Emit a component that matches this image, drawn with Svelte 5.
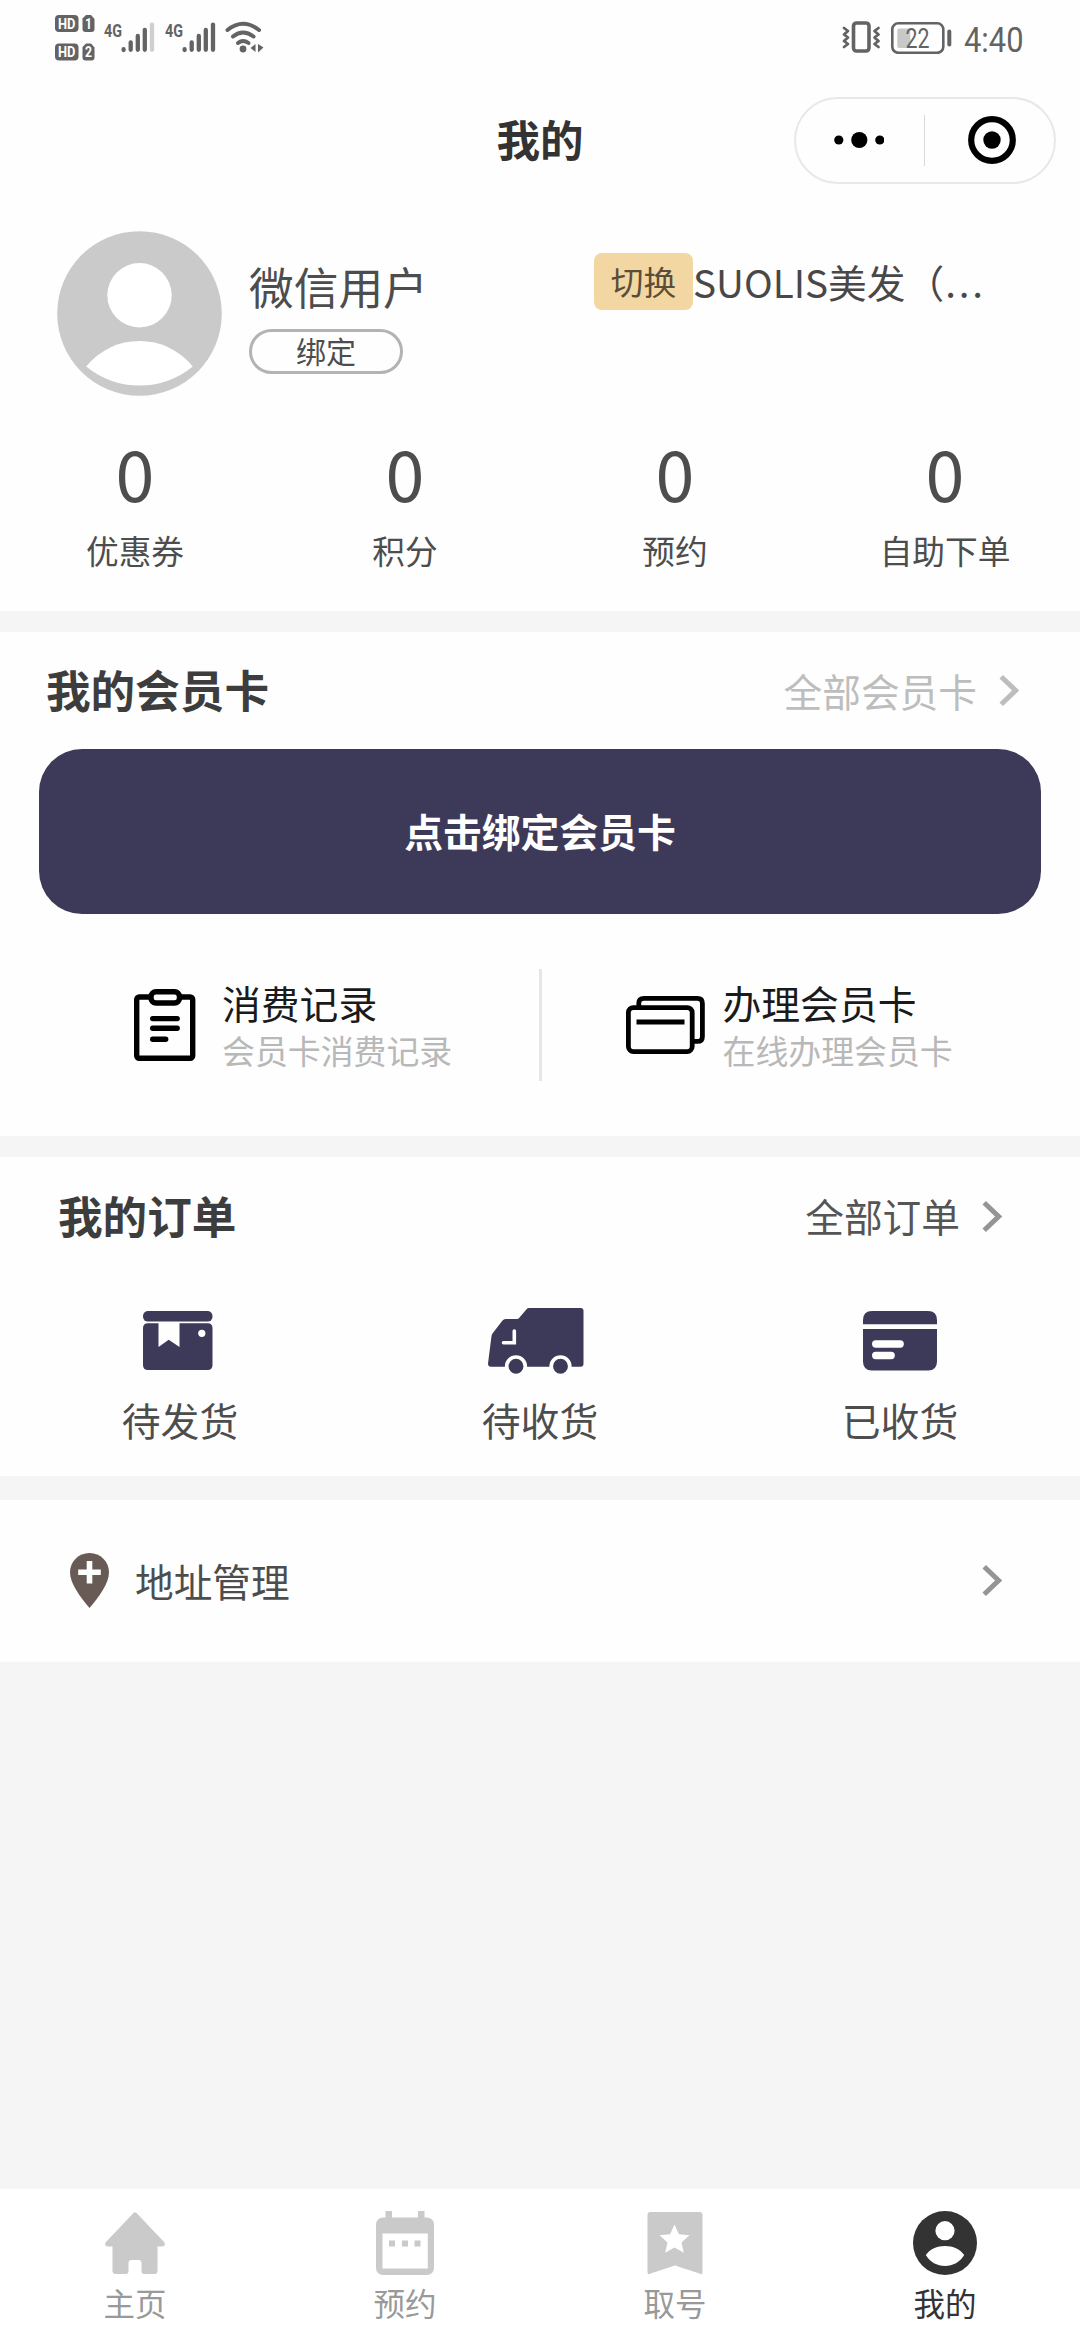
<script lang="ts">
  interface Stat {
    label: string;
    value: number;
  }

  const stats: Stat[] = [
    { label: "优惠券", value: 0 },
    { label: "积分", value: 0 },
    { label: "预约", value: 0 },
    { label: "自助下单", value: 0 },
  ];

  const orders = [
    { icon: "box", label: "待发货" },
    { icon: "truck", label: "待收货" },
    { icon: "done", label: "已收货" },
  ];

  const tabs = [
    { icon: "home", label: "主页" },
    { icon: "calendar", label: "预约" },
    { icon: "ticket", label: "取号" },
    { icon: "user", label: "我的" },
  ];

  let active = $state("user");
</script>

{#snippet chevron()}
  <svg class="chevron" width="20" height="31" viewBox="0 0 20 31">
    <path d="M2.2 1.8 16.6 15.5 2.2 29.2" fill="none" stroke="currentColor" stroke-width="5" />
  </svg>
{/snippet}

{#snippet signal(full: boolean)}
  <svg width="52" height="34" viewBox="0 0 52 34">
    <text x="0" y="17" font-size="19" font-weight="700" textLength="18" lengthAdjust="spacingAndGlyphs">4G</text>
    <g stroke="currentColor" stroke-width="4.3" stroke-linecap="round">
      <path d="M19.6 29.2v.8M26.7 22.4v7.4M33.8 16v13.8M40.8 10v19.8" />
      <path d="M48 4.6v25.2" stroke={full ? "currentColor" : "#cfcfcf"} />
    </g>
  </svg>
{/snippet}

<div class="page">
  <div class="status">
    <svg class="hd" width="40" height="46" viewBox="0 0 40 46">
      <rect x="0" y="0" width="23.5" height="17" rx="4" />
      <path d="M31 0h5l3.5 4v10q0 3-3 3h-6q-3 0-3-3V3.5z" />
      <rect x="0" y="28.5" width="23.5" height="17" rx="4" />
      <path d="M31 28.5h5l3.5 4v10q0 3-3 3h-6q-3 0-3-3V32z" />
      <g fill="#fff" font-size="15" font-weight="700">
        <text x="3" y="13.8" textLength="17.5" lengthAdjust="spacingAndGlyphs">HD</text>
        <text x="30" y="13.8" textLength="7" lengthAdjust="spacingAndGlyphs">1</text>
        <text x="3" y="42.3" textLength="17.5" lengthAdjust="spacingAndGlyphs">HD</text>
        <text x="30" y="42.3" textLength="7" lengthAdjust="spacingAndGlyphs">2</text>
      </g>
    </svg>
    <span class="sim">{@render signal(false)}</span>
    <span class="sim">{@render signal(true)}</span>
    <svg class="wifi" width="40" height="32" viewBox="0 0 40 32">
      <g fill="none" stroke="currentColor" stroke-width="4" stroke-linecap="round">
        <path d="M2.5 9Q18 -3.5 34 9" />
        <path d="M8 15.5q10-8 20.5 0" />
        <path d="M13 22q5-4 10.5 0" />
      </g>
      <circle cx="18" cy="28" r="3.4" />
      <path d="M30.5 23v8l-5-4zM33 23v8.5l5.5-5z" />
    </svg>

    <svg class="vibrate" width="39" height="32" viewBox="0 0 39 32">
      <rect x="11.5" y="2" width="15.5" height="28" rx="3" fill="none" stroke="currentColor" stroke-width="3.6" />
      <g fill="none" stroke="currentColor" stroke-width="2.8" stroke-linejoin="round" stroke-linecap="round">
        <path d="M2 7l4 3-4 3.5 4 3-4 3.5 4 3-4 3" />
        <path d="M36.5 7l-4 3 4 3.5-4 3 4 3.5-4 3 4 3" />
      </g>
    </svg>
    <svg class="battery" width="61" height="32" viewBox="0 0 61 32">
      <rect x="1.3" y="1.3" width="51" height="29.5" rx="6" fill="none" stroke="currentColor" stroke-width="2.6" />
      <rect x="6.3" y="6.5" width="13" height="19.5" rx="2" fill="#c8c8c8" />
      <rect x="56.3" y="7.5" width="4" height="17" rx="2" />
      <text x="14.5" y="25.5" font-size="27" textLength="24" lengthAdjust="spacingAndGlyphs">22</text>
    </svg>
    <svg class="clock" width="62" height="48" viewBox="0 0 62 48">
      <text x="1" y="36.5" font-size="35" textLength="59.5" lengthAdjust="spacingAndGlyphs">4:40</text>
    </svg>
  </div>

  <header class="nav">
    <h1>我的</h1>
    <div class="capsule">
      <svg width="50" height="20" viewBox="0 0 50 20">
        <circle cx="4.8" cy="10" r="4.6" />
        <circle cx="25.3" cy="10" r="8.1" />
        <circle cx="45.8" cy="10" r="4.6" />
      </svg>
      <i></i>
      <svg width="50" height="50" viewBox="0 0 50 50">
        <circle cx="25" cy="25" r="20.8" fill="none" stroke="#000" stroke-width="6.2" />
        <circle cx="25" cy="25" r="8.7" />
      </svg>
    </div>
  </header>

  <section class="profile">
    <div class="user">
      <svg class="avatar" width="165" height="165" viewBox="0 0 165 165">
        <circle cx="82.5" cy="82.5" r="82.3" fill="#cacaca" />
        <circle cx="82.5" cy="64.3" r="32.2" fill="#fff" />
        <path d="M29.2 135.5A68.3 68.3 0 0 1 135.8 135.5A84 84 0 0 1 29.2 135.5z" fill="#fff" />
      </svg>
      <div class="identity">
        <span class="name">微信用户</span>
        <button class="bind">绑定</button>
      </div>
      <div class="store">
        <button class="switch">切换</button>
        <span class="store-name">SUOLIS美发（<span class="dots">...</span></span>
      </div>
    </div>

    <div class="stats">
      {#each stats as stat}
        <div class="stat">
          <strong>{stat.value}</strong>
          <span>{stat.label}</span>
        </div>
      {/each}
    </div>
  </section>

  <section class="member">
    <div class="head">
      <h2>我的会员卡</h2>
      <a class="more" href="#cards"><span>全部会员卡</span>{@render chevron()}</a>
    </div>
    <button class="bind-card"><span>点击绑定会员卡</span></button>
    <div class="links">
      <a class="link" href="#records">
        <svg width="62" height="72" viewBox="0 0 62 72" fill="none" stroke="#000" stroke-width="5.4">
          <rect x="2.7" y="8" width="56" height="61.3" rx="2.5" />
          <rect x="17" y="2.7" width="28.5" height="11.3" rx="5" fill="#fff" />
          <path d="M18.7 29.6h24.5M18.7 39.3h24.5M18.7 50.2h13" stroke-linecap="round" />
        </svg>
        <div>
          <b>消费记录</b>
          <small>会员卡消费记录</small>
        </div>
      </a>
      <i></i>
      <a class="link apply" href="#apply">
        <svg width="79" height="58" viewBox="0 0 79 58" fill="none" stroke="#000" stroke-width="4.8">
          <path d="M12.8 10V7q0-4.6 5-4.6h53.6q5 0 5 5v33q0 5-5 5H68" />
          <rect x="2.4" y="11.6" width="63.8" height="44" rx="5" />
          <path d="M10.5 26h48" />
        </svg>
        <div>
          <b>办理会员卡</b>
          <small>在线办理会员卡</small>
        </div>
      </a>
    </div>
  </section>

  <section class="orders">
    <div class="head">
      <h2>我的订单</h2>
      <a class="more" href="#orders"><span>全部订单</span>{@render chevron()}</a>
    </div>
    <div class="order-row">
      {#each orders as order}
        <div class="order">
          <div class="order-icon {order.icon}">
            {#if order.icon === "box"}
              <svg width="70" height="59" viewBox="0 0 70 59">
                <rect width="69.5" height="10.6" rx="5" />
                <path d="M5 12.3h10.5v23.7l10.2-7.2 10.8 7.2V12.3h28q5 0 5 5V54q0 5-5 5H5q-5 0-5-5V17.3q0-5 5-5z" />
                <circle cx="58.8" cy="22.3" r="3.6" fill="#fff" />
              </svg>
            {:else if order.icon === "truck"}
              <svg width="96" height="66" viewBox="0 0 96 66">
                <path d="M41 0h51.5q3 0 3 3v52.5q0 3.3-3 3.3H3q-3 0-3-3.3L3.5 28q.2-1.5 1-2.5L14.5 12.5q1.2-1.5 3-1.5H29q1.5 0 2.3-1.2L38.5 1.2Q39.5 0 41 0z" />
                <path d="M26.3 23v11.8H15.5" fill="none" stroke="#fff" stroke-width="3.6" stroke-linecap="round" />
                <g stroke="#fff" stroke-width="3.7">
                  <circle cx="28" cy="58.3" r="9.3" />
                  <circle cx="72.5" cy="58.3" r="9.3" />
                </g>
              </svg>
            {:else}
              <svg width="74" height="60" viewBox="0 0 74 60">
                <path d="M9 0h56q9 0 9 9v4.3H0V9q0-9 9-9zM0 18h74v32.5q0 9-9 9H9q-9 0-9-9z" />
                <path d="M12.7 33h24.5M12.7 44.5h15.5" stroke="#fff" stroke-width="7.3" stroke-linecap="round" />
              </svg>
            {/if}
          </div>
          <span>{order.label}</span>
        </div>
      {/each}
    </div>
  </section>

  <section class="address">
    <svg width="39" height="55" viewBox="0 0 39 55">
      <path d="M19.5 0C30.5 0 39 8.5 39 19.5C39 30 29 44 19.5 55C10 44 0 30 0 19.5C0 8.5 8.5 0 19.5 0z" fill="#685b55" />
      <path d="M19.5 8v22.5M8.2 19.3h22.6" stroke="#fff" stroke-width="5.6" />
    </svg>
    <span>地址管理</span>
    {@render chevron()}
  </section>

  <nav class="tabbar">
    {#each tabs as tab}
      <button class="tab" class:active={active === tab.icon} onclick={() => (active = tab.icon)}>
        <svg width="64" height="64" viewBox="0 0 64 64">
          {#if tab.icon === "home"}
            <path d="M30 2.5q2-2.5 4 0L61.5 31.5q1.5 4-3 4H54.5V60q0 3-3 3H41q-2.5 0-2.5-3v-8q0-3-3-3h-7q-3 0-3 3v8q0 3-2.5 3H12.5q-3 0-3-3V35.5H5.5q-4.5 0-3-4z" />
          {:else if tab.icon === "calendar"}
            <rect x="3" y="6.5" width="58" height="57.5" rx="7" />
            <path d="M12.5 0h6.5v10h-6.5zM45 0h6.5v10H45z" />
            <path d="M9.5 22.5h45.3v35H9.5z" fill="#fff" />
            <path d="M16 29.5h6v6h-6zM29 29.5h6v6h-6zM41.5 29.5h6v6h-6z" />
          {:else if tab.icon === "ticket"}
            <path d="M7.5 1h49q3 0 3 3v57q0 3.5-3 1.5L35 55.5q-3-2-6 0L7.5 62.5q-3 2-3-1.5V4q0-3 3-3z" />
            <path d="M31.5 13.5l4.4 9.8 10.6 1-8 7.1 2.3 10.4-9.3-5.4-9.3 5.4 2.3-10.4-8-7.1 10.6-1z" fill="#fff" />
          {:else}
            <circle cx="32" cy="32" r="32" />
            <circle cx="32" cy="19.7" r="9.6" fill="#fff" />
            <path d="M12.8 44C17 38 24 35 32 35s15 3 19.2 9C47 51 40 55 32 55s-15-4-19.2-11z" fill="#fff" />
          {/if}
        </svg>
        <span>{tab.label}</span>
      </button>
    {/each}
  </nav>
</div>

<style>
  :global(body) {
    background: #f5f5f5;
  }

  .page {
    width: 1080px;
    height: 2340px;
    display: flex;
    flex-direction: column;
    background: #f5f5f5;
    color: #4d4d4d;
    font-family: "Noto Sans CJK SC", "Noto Sans", sans-serif;
  }

  .page *,
  .page {
    box-sizing: border-box;
  }

  svg {
    display: block;
    flex: none;
  }

  a {
    color: inherit;
    text-decoration: none;
  }

  button {
    margin: 0;
    padding: 0;
    border: 0;
    background: none;
    color: inherit;
    font: inherit;
  }

  h1,
  h2 {
    margin: 0;
    font-weight: 700;
  }

  section,
  .nav,
  .status,
  .tabbar {
    flex: none;
    background: #fefefe;
  }

  .status {
    height: 80px;
    display: flex;
    align-items: flex-start;
    padding: 15px 55px 0 55px;
    color: #636363;
  }

  .status svg {
    fill: currentColor;
    font-family: Roboto, sans-serif;
  }

  .sim {
    margin: 5px 0 0 9px;
  }

  .wifi {
    margin: 6px 0 0 8px;
  }

  .vibrate {
    margin: 6px 0 0 auto;
  }

  .battery {
    margin: 7px 0 0 10px;
  }

  .clock {
    margin: 0 0 0 11px;
  }

  .nav {
    height: 120px;
    display: grid;
    grid-template-columns: 1fr auto 1fr;
    align-items: center;
    padding-right: 24px;
    padding-left: 24px;
  }

  h1 {
    grid-column: 2;
    padding-bottom: 3px;
    color: #333;
    font-size: 43.5px;
    line-height: 50px;
  }

  .capsule {
    justify-self: end;
    width: 262px;
    height: 87px;
    display: flex;
    align-items: center;
    border: 2px solid #e8e8e8;
    border-radius: 44px;
    padding: 0 37px 0 38px;
  }

  .capsule i {
    flex: none;
    width: 1px;
    height: 51px;
    margin: 0 42px 0 40px;
    background: #d8d8d8;
  }

  .profile {
    height: 411px;
    padding-top: 31px;
  }

  .user {
    display: flex;
    align-items: flex-start;
    padding-left: 57px;
  }

  .identity {
    width: 345px;
    display: flex;
    flex-direction: column;
    align-items: flex-start;
    margin-left: 27px;
    padding-top: 28px;
  }

  .name {
    font-size: 44.7px;
    line-height: 54px;
  }

  .bind {
    width: 154px;
    height: 45px;
    margin-top: 16px;
    padding-bottom: 3px;
    border: 3px solid #b3b3b3;
    border-radius: 23px;
    font-size: 30px;
    line-height: 36px;
  }

  .store {
    display: flex;
    align-items: center;
    margin-top: 22px;
  }

  .switch {
    width: 99px;
    height: 57px;
    padding-bottom: 2px;
    border-radius: 8px;
    background: #f2d7a2;
    color: #5b4d38;
    font-size: 32.7px;
    line-height: 55px;
  }

  .store-name {
    color: #4a4748;
    font-size: 38.7px;
    line-height: 57px;
    white-space: nowrap;
  }

  .dots {
    margin-left: 1px;
    letter-spacing: 2.8px;
  }

  .stats {
    display: grid;
    grid-template-columns: repeat(4, 1fr);
    margin-top: 36px;
  }

  .stat {
    display: flex;
    flex-direction: column;
    align-items: center;
  }

  .stat strong {
    font-size: 70px;
    font-weight: 400;
    line-height: 80px;
  }

  .stat span {
    margin-top: 16px;
    font-size: 32.7px;
    line-height: 44px;
  }

  .member {
    height: 504px;
    margin-top: 21px;
  }

  .head {
    height: 117px;
    display: flex;
    align-items: center;
    justify-content: space-between;
    padding: 0 61px 0 46px;
  }

  h2 {
    padding-bottom: 3px;
    color: #3d3d3d;
    font-size: 44.6px;
    line-height: 54px;
  }

  .more {
    display: flex;
    align-items: center;
    gap: 22px;
    color: #bdbdbd;
    font-size: 38.7px;
    line-height: 50px;
  }

  .more span {
    padding-bottom: 2px;
  }

  .bind-card {
    width: 1002px;
    height: 165px;
    display: flex;
    align-items: center;
    justify-content: center;
    margin: 0 39px;
    border-radius: 43px;
    background: #3d3a59;
    color: #fff;
    font-size: 38.8px;
    font-weight: 700;
    line-height: 50px;
  }

  .bind-card span {
    padding-bottom: 3px;
  }

  .links {
    height: 112px;
    display: flex;
    align-items: center;
    margin-top: 55px;
  }

  .links i {
    width: 3px;
    height: 112px;
    background: #e6e6e6;
  }

  .link {
    width: 538.5px;
    display: flex;
    align-items: center;
    gap: 26px;
    padding-left: 134px;
  }

  .link.apply {
    gap: 18px;
    padding-left: 84px;
  }

  .link div {
    padding-top: 2px;
  }

  .link b,
  .link small {
    display: block;
    font-weight: 400;
    line-height: 48px;
  }

  .link b {
    color: #1a1a1a;
    font-size: 38.8px;
  }

  .link small {
    color: #b8b8b8;
    font-size: 32.9px;
  }

  .orders {
    height: 319px;
    margin-top: 21px;
  }

  .orders .head {
    height: 118px;
    padding: 0 78px 0 58px;
  }

  .orders .more {
    color: #555;
  }

  .orders .chevron,
  .address .chevron {
    color: #959595;
  }

  .order-row {
    display: grid;
    grid-template-columns: repeat(3, 1fr);
    margin-top: 25px;
  }

  .order {
    display: flex;
    flex-direction: column;
    align-items: center;
    font-size: 38.8px;
    line-height: 50px;
  }

  .order-icon {
    height: 81px;
    display: flex;
    align-items: center;
    fill: #3d3a59;
  }

  .order-icon.box {
    padding-right: 4px;
  }

  .order-icon.truck {
    padding-right: 8px;
  }

  .order span {
    margin-top: 13px;
  }

  .address {
    height: 162px;
    display: flex;
    align-items: center;
    margin-top: 24px;
    padding: 0 78px 2px 70px;
    font-size: 38.7px;
    line-height: 50px;
  }

  .address span {
    margin-left: 26px;
  }

  .address .chevron {
    margin-left: auto;
  }

  .tabbar {
    height: 151px;
    display: grid;
    grid-template-columns: repeat(4, 1fr);
    margin-top: auto;
    background: #fff;
  }

  .tab {
    display: flex;
    flex-direction: column;
    align-items: center;
    padding-top: 22px;
    color: #999;
    font-size: 31.5px;
    line-height: 40px;
  }

  .tab svg {
    fill: #cacaca;
  }

  .tab span {
    margin-top: 7px;
  }

  .tab.active {
    color: #333;
  }

  .tab.active svg {
    fill: #333;
  }
</style>
